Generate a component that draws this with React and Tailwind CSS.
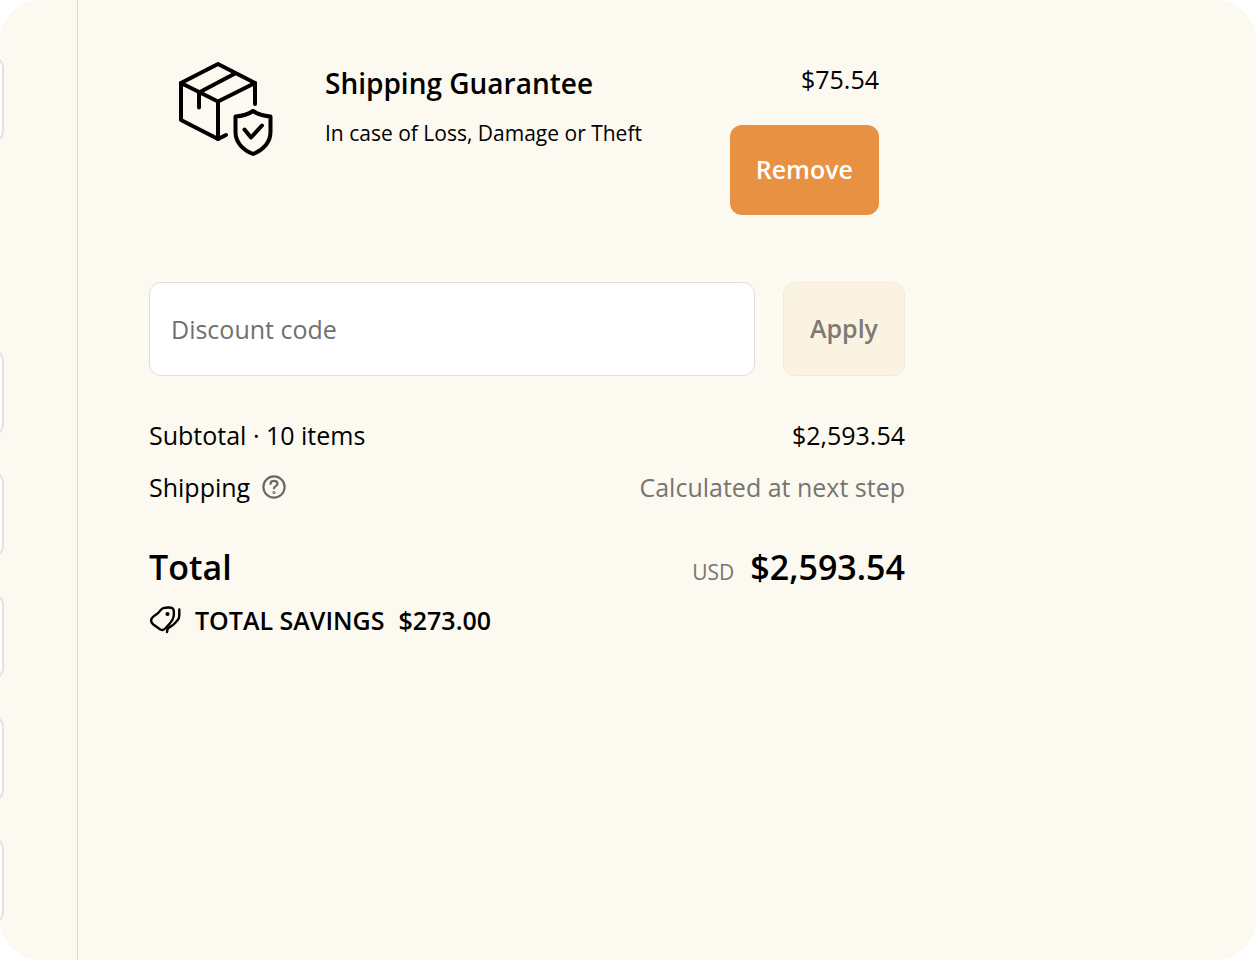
//Imports
import { useState } from "react";

//Form fields of the neighbouring column
const contactFields = [
  { id: "email", label: "Email" },
  { id: "firstName", label: "First name" },
  { id: "lastName", label: "Last name" },
  { id: "address", label: "Address" },
  { id: "city", label: "City" },
  { id: "phone", label: "Phone" },
];

//Icons
const GuaranteeIcon = () => (
  <svg
    viewBox="0 0 96 96"
    className="mt-[6px] size-24"
    fill="none"
    stroke="#000"
    strokeWidth="4"
    strokeLinecap="round"
    strokeLinejoin="round"
    aria-hidden="true"
  >
    <path d="M4 22 41 3l37 19-37 18.500z" />
    <path d="M4 22v37L41 78l8-4" />
    <path d="M41 40.500V78M78 22v21" />
    <path d="M58 12.500 22 31.500v15" />
    <path d="M76 50c-5 3.500-11 5-17.500 5.500v15.500c0 10 7 18 17.500 22 10.500-4 17.500-12 17.500-22V55.500C87 55 81 53.500 76 50z" />
    <path d="m67.500 68.500 6.500 8L85 64.500" />
  </svg>
);

const HelpIcon = () => (
  <svg
    viewBox="0 0 24 24"
    className="size-6"
    fill="none"
    stroke="currentColor"
    strokeWidth="2.200"
    strokeLinecap="round"
    strokeLinejoin="round"
    aria-hidden="true"
  >
    <circle cx="12" cy="12" r="10.600" />
    <path d="M8.500 9c0-1.900 1.600-3.200 3.500-3.200s3.500 1.200 3.500 3c0 2.300-3.500 2.400-3.500 4.500" />
    <circle cx="12" cy="17.500" r=".5" />
  </svg>
);

const SavingsIcon = () => (
  <svg
    viewBox="0 0 32 28"
    className="h-7 w-8"
    fill="none"
    stroke="currentColor"
    strokeWidth="2.400"
    strokeLinecap="round"
    strokeLinejoin="round"
    aria-hidden="true"
  >
    <path d="M14.300 2.200c2.700-.8 5.600-.8 8.200-.4 1.600.4 2.200 1.700 2.300 3.400.1 1.600.1 3.200-.1 4.800-.3 3-1.700 5-3.700 7.300l-4.500 5c-1.600 1.700-3.600 2-5.500.9L4.300 18.500C2.300 16.800 1.500 14.500 2.800 12.300 4 10.300 7 9 9 7.200c2-1.800 2.600-4.200 5.300-5z" />
    <path d="M30.300 3.500v6c0 2.200-.7 3.800-2.200 5.300l-3 3.200c-2 2.200-5.600 3-6.600 5.200L18 26" />
    <circle cx="18.500" cy="8" r=".9" fill="currentColor" />
  </svg>
);

//ContactColumn
const ContactColumn = () => (
  <aside className="flex w-[78px] shrink-0 flex-col items-end gap-[35px] overflow-hidden border-r border-[#e6d6b8] pt-14 pr-[73px]">
    {contactFields.map((f) => (
      <input
        key={f.id}
        id={f.id}
        type="text"
        aria-label={f.label}
        className="h-[87px] w-40 shrink-0 rounded-xl border-2 border-[#e3e3e3] bg-white px-5 first:mb-[171px]"
      />
    ))}
  </aside>
);

//OrderSummary
const OrderSummary = () => {
  const [code, setCode] = useState("");

  return (
    <main className="w-full max-w-[827px] pt-[55px] pl-[71px]">
      <section className="flex pr-[26px] pl-7">
        <GuaranteeIcon />
        <div className="ml-[52px] pt-2">
          <h2 className="text-[28px] leading-10 font-semibold">
            Shipping Guarantee
          </h2>
          <p className="mt-[14px] text-[21px] leading-8">
            In case of Loss, Damage or Theft
          </p>
        </div>
        <div className="ml-auto flex flex-col items-end gap-[26px] pt-1">
          <span className="text-[25px] leading-10">$75.54</span>
          <button
            type="button"
            className="h-[90px] rounded-xl bg-[#e89142] px-[26px] text-[25px] font-semibold text-white"
          >
            Remove
          </button>
        </div>
      </section>

      <form
        className="mt-[67px] flex gap-7"
        onSubmit={(e) => e.preventDefault()}
      >
        <input
          type="text"
          aria-label="Discount code"
          placeholder="Discount code"
          value={code}
          onChange={(e) => setCode(e.target.value)}
          className="h-[94px] min-w-0 flex-1 rounded-xl border border-[#dedede] bg-white px-[21px] text-[25px] placeholder:text-[#707070]"
        />
        <button
          type="submit"
          className="rounded-xl border border-[#f2ead8] bg-[#faf3e1] px-[26px] text-[25px] font-semibold text-[#7d7a72]"
        >
          Apply
        </button>
      </form>

      <dl className="mt-[39px] text-[25px] leading-10">
        <div className="flex justify-between">
          <dt>Subtotal · 10 items</dt>
          <dd>$2,593.54</dd>
        </div>
        <div className="mt-3 flex justify-between">
          <dt className="flex items-center gap-3">
            Shipping
            <button
              type="button"
              aria-label="Shipping policy"
              className="text-[#6b6962]"
            >
              <HelpIcon />
            </button>
          </dt>
          <dd className="text-[#777570]">Calculated at next step</dd>
        </div>
        <div className="mt-8 flex items-baseline justify-between font-semibold">
          <dt className="text-[34px] leading-[56px]">Total</dt>
          <dd className="flex items-baseline gap-4 text-[34px] leading-[56px]">
            <span className="text-[21px] font-normal text-[#777570]">USD</span>
            $2,593.54
          </dd>
        </div>
        <div className="flex items-center gap-[14px] font-semibold">
          <dt className="flex items-center gap-[14px]">
            <SavingsIcon />
            TOTAL SAVINGS
          </dt>
          <dd>$273.00</dd>
        </div>
      </dl>
    </main>
  );
};

//App
const App = () => {
  return (
    <div className="flex min-h-screen overflow-hidden rounded-[40px] bg-[#fcf9f0] font-['Open_Sans','Noto_Sans',sans-serif] text-black">
      <ContactColumn />
      <OrderSummary />
    </div>
  );
};

export default App;
